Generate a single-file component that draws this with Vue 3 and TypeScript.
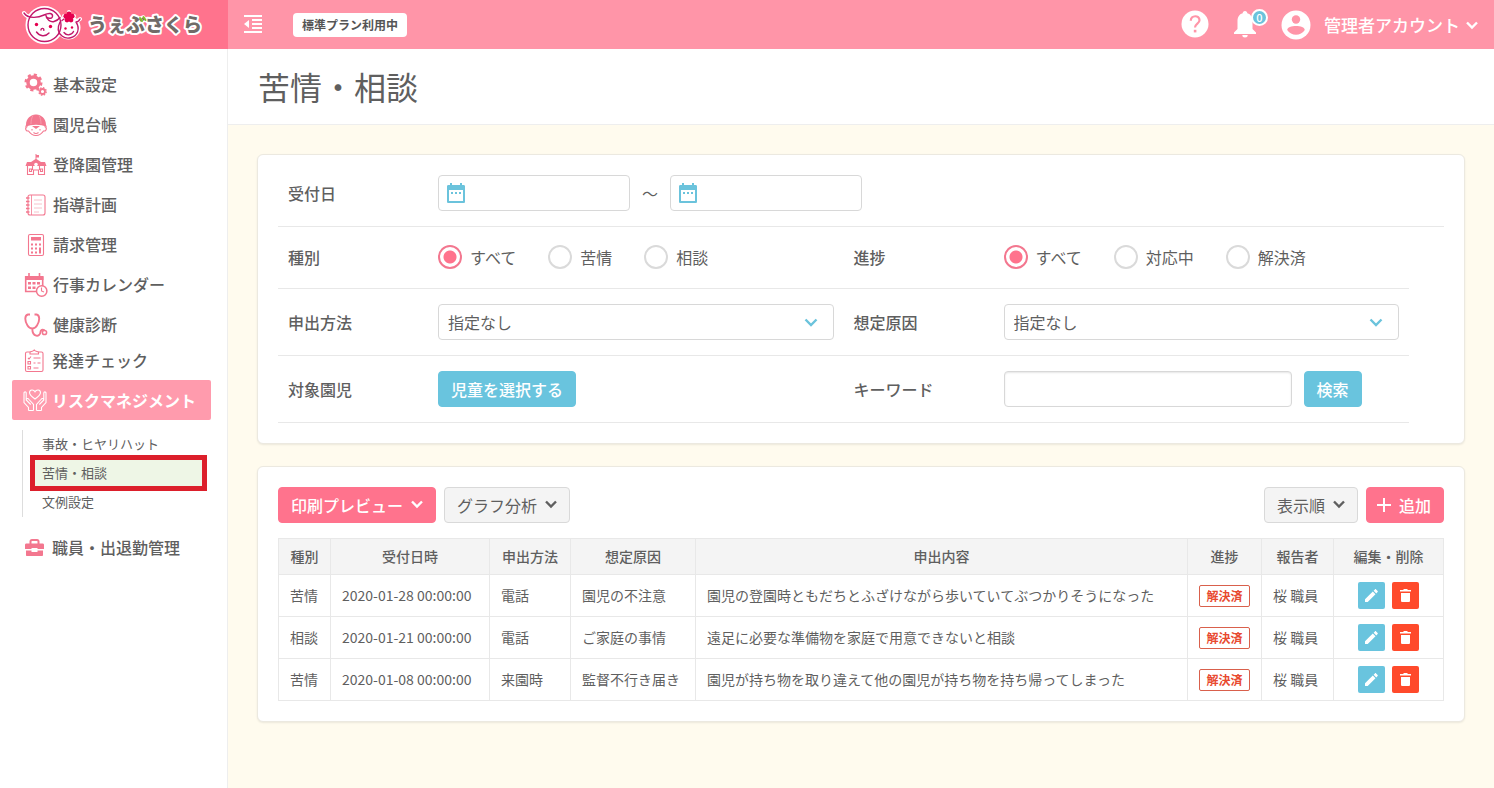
<script setup lang="ts">
import { ref } from 'vue'

interface NavItem {
  icon: string
  label: string
}

interface Complaint {
  kind: string
  date: string
  method: string
  cause: string
  content: string
  status: string
  reporter: string
}

const navItems: NavItem[] = [
  { icon: 'gear', label: '基本設定' },
  { icon: 'child', label: '園児台帳' },
  { icon: 'school', label: '登降園管理' },
  { icon: 'note', label: '指導計画' },
  { icon: 'calc', label: '請求管理' },
  { icon: 'calendar', label: '行事カレンダー' },
  { icon: 'steth', label: '健康診断' },
]

const subItems: string[] = ['事故・ヒヤリハット', '苦情・相談', '文例設定']
const currentSub = '苦情・相談'

const kinds: string[] = ['すべて', '苦情', '相談']
const progresses: string[] = ['すべて', '対応中', '解決済']
const kind = ref<string>('すべて')
const progress = ref<string>('すべて')
const dateFrom = ref<string>('')
const dateTo = ref<string>('')
const keyword = ref<string>('')

const rows: Complaint[] = [
  {
    kind: '苦情',
    date: '2020-01-28 00:00:00',
    method: '電話',
    cause: '園児の不注意',
    content: '園児の登園時ともだちとふざけながら歩いていてぶつかりそうになった',
    status: '解決済',
    reporter: '桜 職員',
  },
  {
    kind: '相談',
    date: '2020-01-21 00:00:00',
    method: '電話',
    cause: 'ご家庭の事情',
    content: '遠足に必要な準備物を家庭で用意できないと相談',
    status: '解決済',
    reporter: '桜 職員',
  },
  {
    kind: '苦情',
    date: '2020-01-08 00:00:00',
    method: '来園時',
    cause: '監督不行き届き',
    content: '園児が持ち物を取り違えて他の園児が持ち物を持ち帰ってしまった',
    status: '解決済',
    reporter: '桜 職員',
  },
]
</script>

<template>
  <div class="app">
    <header class="topbar">
      <a class="logo" href="#" aria-label="うぇぶさくら">
        <svg width="190" height="46" viewBox="0 0 190 46">
          <g fill="#fff" stroke="#fff" stroke-width="4" stroke-linejoin="round" stroke-linecap="round">
            <circle cx="22.5" cy="23" r="17" />
            <circle cx="46.5" cy="25.5" r="10" />
            <path d="M2 11c3 5 8 5 13 4M54 20l4-3M47 10v8M42 14h10" />
          </g>
          <g fill="none" stroke="#c2186b" stroke-width="1.4" stroke-linecap="round" stroke-linejoin="round">
            <circle cx="22.5" cy="23" r="16.5" />
            <path d="M38 20c-3 6-2 11 2 14 5 4 13 2 15.500-4 1.500-4 .5-7-1.500-10 1 0 3-1 4-3M40 18.500l2-1.500" />
            <path d="M2 11c4 6 14 5 20 2 5-2.500 9-2 8.500 1.500-.5 3-6 2-6.500-1 0 4 5 7 8 6 3-.8 4.500-2 6-4" />
            <path d="M14.500 30c3 4.500 9 5 12.500 1M19 28c0-2.500 3.200-2 2.800.3M42 30.500c2.500 3.500 7.500 3 9.500-1" />
          </g>
          <g fill="#e5004f">
            <circle cx="14.5" cy="22.5" r="1.700" />
            <circle cx="28.5" cy="24.500" r="1.700" />
            <circle cx="43.5" cy="26.5" r="1.200" />
            <circle cx="50" cy="25.5" r="1.200" />
            <circle cx="47" cy="11.800" r="2.400" />
            <circle cx="50.200" cy="14.200" r="2.400" />
            <circle cx="49" cy="18" r="2.400" />
            <circle cx="45" cy="18" r="2.400" />
            <circle cx="43.800" cy="14.200" r="2.400" />
            <circle cx="47" cy="15.500" r="2.400" />
          </g>
          <text class="logo-text" x="66" y="30">うぇぶさくら</text>
          <path d="M118 16l2 3M121.500 15l2 3" stroke="#7fbe26" stroke-width="2" stroke-linecap="round" />
        </svg>
      </a>
      <div class="bar">
        <button class="plain collapse" type="button" aria-label="メニューを折りたたむ">
          <svg width="18" height="18" viewBox="0 0 18 18" fill="#fff">
            <path d="M0 0h18v2H0zM8 4h10v2H8zM8 8h10v2H8zM8 12h10v2H8zM0 16h18v2H0zM5 5v8L0 9z" />
          </svg>
        </button>
        <span class="plan">標準プラン利用中</span>
        <div class="bar-right">
          <button class="plain help" type="button" aria-label="ヘルプ">
            <svg width="28" height="28" viewBox="0 0 28 28">
              <circle cx="14" cy="14" r="13.500" fill="#fff" />
              <path d="M9.800 10.800c0-6 8.700-6 8.700-.5 0 3.200-4.500 3.500-4.500 7.200" fill="none" stroke="#ff95a8" stroke-width="2.200" />
              <path d="M12.800 19.800h2.600v2.600h-2.600z" fill="#ff95a8" />
            </svg>
          </button>
          <button class="plain bell" type="button" aria-label="お知らせ">
            <svg width="22" height="28" viewBox="0 0 22 28" fill="#fff">
              <path d="M11 1c-1.500 0-2.300 1-2.300 2.300C5 4.200 3.500 7.500 3.500 11v8L0 22.500V24h22v-1.500L18.500 19v-8c0-3.500-1.500-6.800-5.200-7.700C13.300 2 12.500 1 11 1zM8.300 25a2.700 2.500 0 0 0 5.400 0z" />
            </svg>
            <span class="count">0</span>
          </button>
          <button class="plain account" type="button">
            <svg width="30" height="30" viewBox="0 0 30 30">
              <circle cx="15" cy="15" r="14.500" fill="#fff" />
              <circle cx="15" cy="9.500" r="4.200" fill="#ff95a8" />
              <path d="M6.200 20c0-5.500 17.600-5.500 17.600 0-3.800 6.300-13.800 6.300-17.600 0z" fill="#ff95a8" />
            </svg>
            <span>管理者アカウント</span>
            <svg class="chev" width="12" height="12" viewBox="0 0 12 12"><path d="M1 3.500l5 5 5-5" /></svg>
          </button>
        </div>
      </div>
    </header>

    <div class="body">
      <nav class="side">
        <a v-for="item in navItems" :key="item.label" class="nav-item" href="#">
          <svg class="nav-icon" width="24" height="24" viewBox="0 0 24 24">
            <template v-if="item.icon === 'gear'">
              <circle cx="9.500" cy="9.500" r="5.500" stroke-width="3.500" />
              <circle cx="9.500" cy="9.500" r="7.800" stroke-width="2.400" stroke-dasharray="3.100 3.026" />
              <circle cx="18.500" cy="18.500" r="2.500" stroke-width="1.800" />
              <circle cx="18.500" cy="18.500" r="3.700" stroke-width="1.400" stroke-dasharray="1.500 1.400" />
            </template>
            <template v-else-if="item.icon === 'child'">
              <path class="solid" d="M2 12C2 5 7 2 11.500 1.500h1C17 2 22 5 22 12l1 2c-7-3-15-3-22 0z" />
              <path d="M9 2.500C7.500 5 7 8 7 11M15 2.500c1.500 2.500 2 5.500 2 8.500" stroke="#f9a3b3" stroke-width=".8" />
              <path d="M3.500 13.500c-3 1-2 5 1 4.500 4 6 11 6 15 0 3 .5 4-3.500 1-4.500M8 16v1.500M16 16v1.500M9.500 19.500c1.500 1.200 3.500 1.200 5 0" />
              <path class="solid" d="M8 13h8l-4 3z" />
            </template>
            <template v-else-if="item.icon === 'school'">
              <path class="solid" d="M11.500 1h1v1h2.500v2.500h-2.500V6L17 9h4l1.500 4H1.500L3 9h4l4.500-3z" />
              <path d="M3.500 13v8.500h6V17h5v4.500h6V13M5.500 16h2v2.500h-2zM16.500 16h2v2.500h-2zM8.500 13v4M15.500 13v4" />
              <circle cx="12" cy="11.500" r="1.800" fill="#fff" stroke="none" />
            </template>
            <template v-else-if="item.icon === 'note'">
              <rect x="4" y="2" width="17" height="20" rx="2" />
              <path d="M7.500 2v20" stroke-width=".8" />
              <path d="M2 5h3.500M2 8.500h3.500M2 12h3.500M2 15.500h3.500M2 19h3.500" stroke-width="1.400" />
              <path d="M10 7h8M10 11h8M10 15h8M10 19h5" stroke="#f6b3bf" stroke-width=".8" />
            </template>
            <template v-else-if="item.icon === 'calc'">
              <rect x="4.500" y="1.500" width="15" height="21" rx="1.500" />
              <path class="solid" d="M7 4h10v3.500H7zM7 10.500h2v2H7zM11 10.500h2v2h-2zM15 10.500h2v2h-2zM7 14.500h2v2H7zM11 14.500h2v2h-2zM7 18.500h2v2H7zM11 18.500h2v2h-2zM15 14.500h2v6h-2z" />
            </template>
            <template v-else-if="item.icon === 'calendar'">
              <path d="M13 18.500H1.700V3.700h17v9.500M5 0v5M15.500 0v5" stroke-width="1.600" />
              <path class="solid" d="M1 3.500h18.500V7H1zM4 9h3v2.500H4zM8.500 9h3v2.500h-3zM13 9h3v2.500h-3zM4 13.500h3V16H4zM8.500 13.500h3V16h-3z" />
              <circle cx="17.700" cy="18" r="5.200" fill="#fff" stroke-width="1.500" />
              <path d="M17.500 14.500V18l2.500 1" />
            </template>
            <template v-else>
              <path d="M6 1.500H4C.5 2 .5 8 3.500 12.500c2.500 4 7 4 9.500 0C16 8 16 2 12.500 1.500h-2M8.300 15.500c0 9 7.700 9 8.200 3.500.3-3 4-3 4.500-.5" stroke-width="1.900" />
              <circle cx="20.500" cy="19.500" r="2.100" fill="#fff" stroke-width="1.500" />
            </template>
          </svg>
          <span>{{ item.label }}</span>
        </a>
        <a class="nav-item short" href="#">
          <svg class="nav-icon" width="24" height="24" viewBox="0 0 24 24">
            <rect x="2.500" y="3" width="17.500" height="19.500" rx="1.500" />
            <path d="M7 3.500c0-1.500 3-.5 4.200-2.500 1.300 2 4.300 1 4.300 2.500V5H7z" fill="#fff" />
            <path d="M5 9l1 1 2-2.500M5 12.500h2.500V15H5zM5 17.500h2.500V20H5zM10.500 9h7M10.500 14h2M14.500 14h3M10.500 19h5" />
          </svg>
          <span>発達チェック</span>
        </a>
        <a class="nav-item active" href="#">
          <svg class="nav-icon" width="24" height="24" viewBox="0 0 24 24">
            <path d="M12 11C8 8 6.500 6.500 6.500 4.700c0-3.200 4-3.700 5.500-.9 1.500-2.800 5.500-2.300 5.500.9 0 1.800-1.500 3.300-5.500 6.300z" />
            <path d="M5.500 22.500v-3L1 14.500V5c0-1.500 2.200-1.500 2.200 0v7l4.500 4.500M3.200 11.500c1-1.500 2-1 2.800 0l4.500 5v6M18.500 22.500v-3l4.500-5V5c0-1.500-2.200-1.500-2.200 0v7l-4.500 4.500M20.800 11.500c-1-1.500-2-1-2.800 0l-4.500 5v6M5.500 22.500h5M13.500 22.500h5" />
          </svg>
          <span>リスクマネジメント</span>
        </a>
        <div class="sub">
          <a v-for="s in subItems" :key="s" href="#" :class="['sub-item', { current: s === currentSub }]">{{ s }}</a>
        </div>
        <a class="nav-item" href="#">
          <svg class="nav-icon" width="24" height="24" viewBox="0 0 24 24">
            <path d="M7.500 8V5.500c0-1 .5-1.500 1.500-1.500h5c1 0 1.500.5 1.500 1.500V8" stroke-width="2" />
            <path class="solid" d="M3.500 7.500h16c1 0 1.500.5 1.500 1.500v4h-6.500v-1h-6v1H2V9c0-1 .5-1.500 1.500-1.500zM3 14.500h5.500v1.500h6v-1.500H20V19c0 .7-.5 1-1 1H4c-.7 0-1-.3-1-1z" />
          </svg>
          <span>職員・出退勤管理</span>
        </a>
      </nav>

      <main class="main">
        <div class="title-bar"><h1>苦情・相談</h1></div>

        <div class="content">
          <form class="card search" @submit.prevent>
            <div class="row full">
              <div class="field">
                <label class="name" for="date-from">受付日</label>
                <div class="dates">
                  <span class="date-box">
                    <svg width="18" height="20" viewBox="0 0 18 20" fill="#6bc3dc">
                      <path d="M3 0h2v2h8V0h2v2h1.500C17.500 2 18 2.500 18 3.500v15c0 1-.5 1.500-1.500 1.500h-15C.5 20 0 19.500 0 18.500v-15C0 2.500.5 2 1.500 2H3zM2 7v11h14V7zM4 9h2v2H4zM8 9h2v2H8zM12 9h2v2h-2z" />
                    </svg>
                    <input id="date-from" v-model="dateFrom" type="text" />
                  </span>
                  <span class="tilde">～</span>
                  <span class="date-box">
                    <svg width="18" height="20" viewBox="0 0 18 20" fill="#6bc3dc">
                      <path d="M3 0h2v2h8V0h2v2h1.500C17.500 2 18 2.500 18 3.500v15c0 1-.5 1.500-1.500 1.500h-15C.5 20 0 19.500 0 18.500v-15C0 2.500.5 2 1.500 2H3zM2 7v11h14V7zM4 9h2v2H4zM8 9h2v2H8zM12 9h2v2h-2z" />
                    </svg>
                    <input v-model="dateTo" type="text" aria-label="受付日の終了" />
                  </span>
                </div>
              </div>
            </div>
            <div class="row radios-row">
              <div class="field">
                <span class="name">種別</span>
                <div class="radios">
                  <label v-for="k in kinds" :key="k"><input v-model="kind" type="radio" name="kind" :value="k" />{{ k }}</label>
                </div>
              </div>
              <div class="field">
                <span class="name">進捗</span>
                <div class="radios">
                  <label v-for="p in progresses" :key="p"><input v-model="progress" type="radio" name="progress" :value="p" />{{ p }}</label>
                </div>
              </div>
            </div>
            <div class="row">
              <div class="field">
                <label class="name" for="method">申出方法</label>
                <div class="select">
                  <select id="method"><option>指定なし</option></select>
                  <svg class="chev" width="14" height="14" viewBox="0 0 14 14"><path d="M1.500 4.500L7 10l5.500-5.500" /></svg>
                </div>
              </div>
              <div class="field">
                <label class="name" for="cause">想定原因</label>
                <div class="select">
                  <select id="cause"><option>指定なし</option></select>
                  <svg class="chev" width="14" height="14" viewBox="0 0 14 14"><path d="M1.500 4.500L7 10l5.500-5.500" /></svg>
                </div>
              </div>
            </div>
            <div class="row">
              <div class="field">
                <span class="name">対象園児</span>
                <button class="btn blue" type="button">児童を選択する</button>
              </div>
              <div class="field">
                <label class="name" for="keyword">キーワード</label>
                <input id="keyword" v-model="keyword" class="keyword" type="text" />
                <button class="btn blue" type="submit">検索</button>
              </div>
            </div>
          </form>

          <section class="card list">
            <div class="tools">
              <button class="btn pink" type="button">
                印刷プレビュー<svg class="chev" width="12" height="12" viewBox="0 0 12 12"><path d="M1 2.500l5 5 5-5" /></svg>
              </button>
              <button class="btn gray" type="button">
                グラフ分析<svg class="chev" width="12" height="12" viewBox="0 0 12 12"><path d="M1 2.500l5 5 5-5" /></svg>
              </button>
              <button class="btn gray push" type="button">
                表示順<svg class="chev" width="12" height="12" viewBox="0 0 12 12"><path d="M1 2.500l5 5 5-5" /></svg>
              </button>
              <button class="btn pink add" type="button">
                <svg width="14" height="14" viewBox="0 0 14 14" fill="#fff"><path d="M6 0h2v6h6v2H8v6H6V8H0V6h6z" /></svg>追加
              </button>
            </div>
            <table>
              <colgroup>
                <col class="c-kind" /><col class="c-date" /><col class="c-method" /><col class="c-cause" /><col />
                <col class="c-status" /><col class="c-reporter" /><col class="c-edit" />
              </colgroup>
              <thead>
                <tr>
                  <th>種別</th><th>受付日時</th><th>申出方法</th><th>想定原因</th><th>申出内容</th>
                  <th>進捗</th><th>報告者</th><th>編集・削除</th>
                </tr>
              </thead>
              <tbody>
                <tr v-for="r in rows" :key="r.date">
                  <td>{{ r.kind }}</td>
                  <td>{{ r.date }}</td>
                  <td>{{ r.method }}</td>
                  <td>{{ r.cause }}</td>
                  <td>{{ r.content }}</td>
                  <td class="boxed"><span class="status">{{ r.status }}</span></td>
                  <td>{{ r.reporter }}</td>
                  <td class="boxed">
                    <div class="actions">
                      <button class="icon-btn edit" type="button" aria-label="編集">
                        <svg width="13" height="13" viewBox="0 0 13 13" fill="#fff">
                          <path d="M0 13v-2.700l7.800-7.800 2.700 2.700L2.700 13zM8.600 1.700l1.300-1.300c.4-.4.800-.4 1.200 0l1.500 1.500c.4.400.4.800 0 1.200l-1.300 1.300z" />
                        </svg>
                      </button>
                      <button class="icon-btn remove" type="button" aria-label="削除">
                        <svg width="11" height="13" viewBox="0 0 11 13" fill="#fff">
                          <path d="M3.500 0h4v1H11v1.500H0V1h3.500zM1 4h9v7.500c0 1-.5 1.500-1.500 1.500h-6C1.500 13 1 12.500 1 11.500z" />
                        </svg>
                      </button>
                    </div>
                  </td>
                </tr>
              </tbody>
            </table>
          </section>
        </div>
      </main>
    </div>
  </div>
</template>

<style>
body {
  margin: 0;
  background: #fff;
}
</style>

<style scoped>
.app {
  display: flex;
  flex-direction: column;
  min-height: 100vh;
  color: #5f5f5f;
  font-family: "Noto Sans CJK JP", sans-serif;
  font-size: 16px;
  line-height: 24px;
}
.app *,
.app {
  box-sizing: border-box;
}
svg {
  display: block;
  flex: none;
}
a {
  color: inherit;
  text-decoration: none;
}
button,
input,
select {
  margin: 0;
  font: inherit;
  color: inherit;
}
button {
  cursor: pointer;
}
.plain {
  display: flex;
  align-items: center;
  padding: 0;
  border: 0;
  background: none;
}
.chev path {
  fill: none;
  stroke: currentColor;
  stroke-width: 2.4;
}

.topbar {
  display: flex;
  height: 49px;
}
.logo {
  display: flex;
  align-items: center;
  width: 228px;
  padding-left: 22px;
  background: #ff738d;
}
.logo-text {
  fill: #716b68;
  stroke: #fff;
  stroke-width: 4px;
  stroke-linejoin: round;
  paint-order: stroke;
  font-size: 19px;
  font-weight: 900;
}
.bar {
  display: flex;
  flex: 1;
  align-items: center;
  padding: 0 16px;
  background: #ff95a8;
  color: #fff;
}
.collapse {
  padding-bottom: 1px;
}
.plan {
  margin-left: 31px;
  padding: 0 9px;
  border-radius: 4px;
  background: #fff;
  color: #555;
  font-size: 12px;
  font-weight: 700;
}
.bar-right {
  display: flex;
  align-items: center;
  margin-left: auto;
}
.help {
  padding-bottom: 2px;
}
.bell {
  position: relative;
  margin: 0 25px;
  padding-bottom: 2px;
}
.count {
  position: absolute;
  top: -1px;
  right: -12px;
  width: 17px;
  height: 17px;
  border: 2px solid #fff;
  border-radius: 50%;
  background: #6bc3dc;
  font-size: 11px;
  font-weight: 500;
  line-height: 12px;
  text-align: center;
}
.account {
  font-size: 17px;
  font-weight: 500;
}
.account span {
  margin: 0 6px 0 13px;
}

.body {
  display: flex;
  flex: 1;
}
.side {
  width: 228px;
  padding: 16px 16px 0 12px;
  border-right: 1px solid #eee;
}
.nav-item {
  display: flex;
  align-items: center;
  gap: 5px;
  height: 40px;
  padding-left: 12px;
  border-radius: 2px;
  font-weight: 500;
}
.nav-item span {
  padding-bottom: 2px;
}
.nav-item.short {
  height: 32px;
  margin-bottom: 3px;
}
.nav-item.short,
.nav-item.active,
.sub + .nav-item {
  padding-left: 11px;
}
.nav-item.active {
  background: #ff9bad;
  color: #fff;
  font-weight: 700;
}
.nav-item.active span {
  padding-bottom: 0;
}
.nav-icon {
  fill: none;
  stroke: #f3778f;
  stroke-width: 1.1;
}
.nav-icon .solid {
  fill: #f3778f;
  stroke: none;
}
.active .nav-icon {
  stroke: #fff;
}
.sub {
  display: flex;
  flex-direction: column;
  margin: 10px 9px 11px 10px;
  padding-left: 12px;
  border-left: 1px solid #ddd;
}
.sub-item {
  padding: 0 0 2px 7px;
  font-size: 13px;
  line-height: 27px;
}
.sub-item.current {
  margin: 1px 0 2px;
  padding-bottom: 0;
  background: #eef6e6;
  outline: 5px solid #dc1f2b;
  line-height: 26px;
}

.main {
  display: flex;
  flex: 1;
  flex-direction: column;
  min-width: 0;
}
.title-bar {
  padding: 13px 30px 14px;
  border-bottom: 1px solid #eee;
}
h1 {
  margin: 0;
  font-size: 32px;
  font-weight: 400;
  line-height: 48px;
}
.content {
  display: flex;
  flex: 1;
  flex-direction: column;
  gap: 22px;
  padding: 29px 29px 40px;
  background: #fffbee;
}
.card {
  border: 1px solid #ece9e0;
  border-radius: 6px;
  background: #fff;
  box-shadow: 0 1px 2px rgba(0, 0, 0, 0.08);
}
.search {
  padding: 5px 20px 20px;
}
.row {
  display: grid;
  grid-template-columns: 1fr 1fr;
  margin-right: 35px;
  padding: 15px 0;
  border-bottom: 1px solid #e8e8e8;
}
.row.full {
  grid-template-columns: 1fr;
  margin-right: 0;
}
.radios-row {
  padding: 12px 0 13px;
}
.field {
  display: flex;
  align-items: center;
  min-height: 36px;
  padding: 0 10px;
}
.name {
  flex: none;
  width: 150px;
  font-weight: 500;
}
.dates {
  display: flex;
  align-items: center;
}
.date-box {
  display: flex;
  align-items: center;
  gap: 6px;
  width: 192px;
  height: 36px;
  padding: 0 8px;
  border: 1px solid #d8d8d8;
  border-radius: 4px;
}
.date-box input {
  flex: 1;
  min-width: 0;
  padding: 0;
  border: 0;
  outline: 0;
  background: none;
}
.tilde {
  margin: 0 12px;
}
.radios {
  display: flex;
  gap: 32px;
  padding-bottom: 1px;
}
.radios label {
  display: flex;
  align-items: center;
  gap: 8px;
}
.radios input {
  width: 24px;
  height: 24px;
  border: 2px solid #dadada;
  border-radius: 50%;
  appearance: none;
  background: #fff;
}
.radios input:checked {
  border-color: #f3778f;
  background: radial-gradient(circle, #ff738d 6px, #fff 7px);
}
.select {
  position: relative;
  flex: 1;
}
select {
  display: block;
  width: 100%;
  height: 36px;
  padding: 0 40px 0 9px;
  border: 1px solid #d8d8d8;
  border-radius: 4px;
  appearance: none;
  background: #fff;
}
.select .chev {
  position: absolute;
  top: 11px;
  right: 16px;
  color: #6bc3dc;
  pointer-events: none;
}
.keyword {
  width: 288px;
  height: 36px;
  margin-right: 12px;
  padding: 0 10px;
  border: 1px solid #d8d8d8;
  border-radius: 4px;
  box-shadow: inset 0 1px 2px rgba(0, 0, 0, 0.1);
}
.btn {
  display: flex;
  align-items: center;
  gap: 8px;
  height: 36px;
  padding: 0 12px;
  border: 1px solid transparent;
  border-radius: 4px;
  color: #fff;
  font-weight: 500;
  white-space: nowrap;
}
.blue {
  border-color: #69c4de;
  background: #69c4de;
}
.pink {
  border-color: #ff738d;
  background: #ff738d;
}
.gray {
  border-color: #d9d9d9;
  background: #f4f4f4;
  color: #5f5f5f;
  font-weight: 400;
}
.push {
  margin-left: auto;
}
.add {
  padding-left: 10px;
}

.list {
  padding: 20px;
}
.tools {
  display: flex;
  gap: 8px;
  margin-bottom: 15px;
}
table {
  width: 100%;
  border-collapse: collapse;
  table-layout: fixed;
  font-size: 14px;
  line-height: 20px;
}
.c-kind { width: 52px; }
.c-date { width: 159px; }
.c-method { width: 81px; }
.c-cause { width: 125px; }
.c-status { width: 74px; }
.c-reporter { width: 72px; }
.c-edit { width: 110px; }
th,
td {
  padding: 0 11px 2px;
  border: 1px solid #e8e8e8;
  white-space: nowrap;
}
th {
  height: 36px;
  padding: 0 0 2px;
  background: #f4f4f4;
  font-weight: 500;
}
td {
  height: 42px;
  text-align: left;
}
td.boxed {
  padding-bottom: 0;
}
.status {
  display: block;
  border: 1px solid #d9604c;
  border-radius: 2px;
  color: #e8492f;
  font-size: 12px;
  font-weight: 700;
  text-align: center;
}
.actions {
  display: flex;
  justify-content: center;
  gap: 7px;
}
.icon-btn {
  display: flex;
  align-items: center;
  justify-content: center;
  width: 27px;
  height: 27px;
  padding: 0;
  border: 0;
  border-radius: 2px;
}
.edit {
  background: #69c4de;
}
.remove {
  background: #ff4a2b;
}
</style>
